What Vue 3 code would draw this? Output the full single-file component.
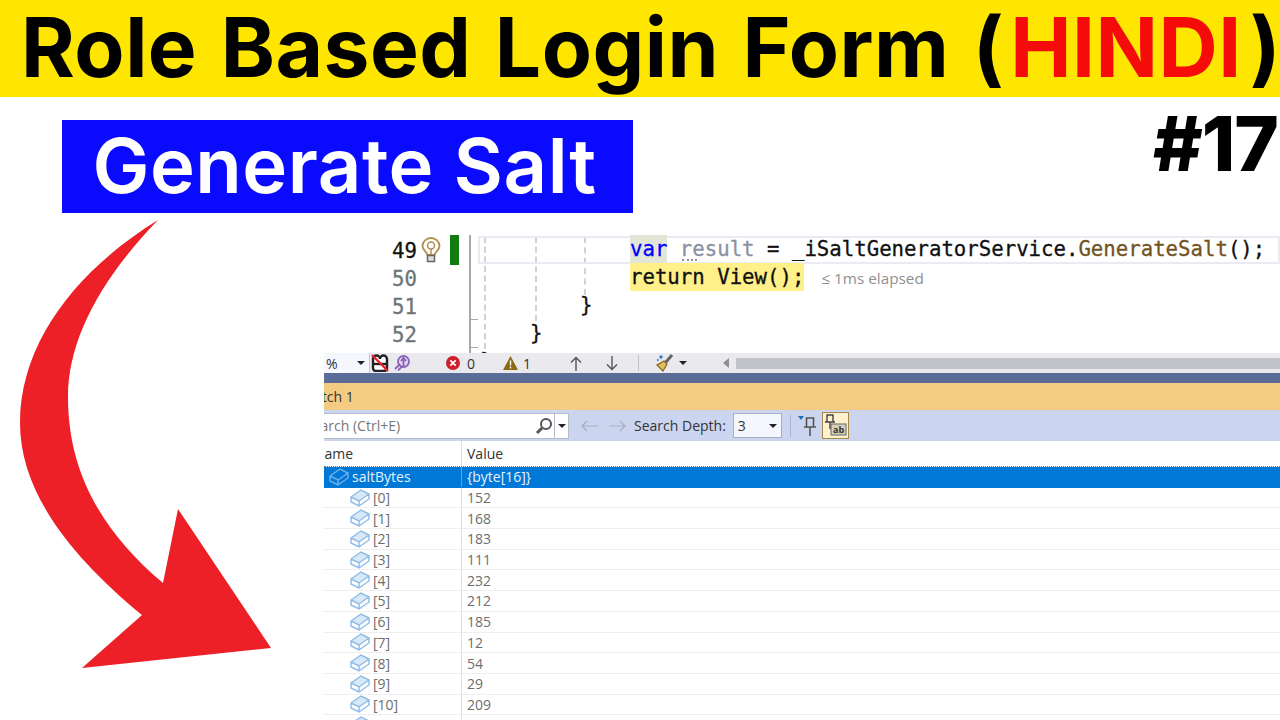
<script setup>
const rows = [
  ['[0]', '152'], ['[1]', '168'], ['[2]', '183'], ['[3]', '111'], ['[4]', '232'], ['[5]', '212'],
  ['[6]', '185'], ['[7]', '12'], ['[8]', '54'], ['[9]', '29'], ['[10]', '209'], ['[11]', '94']
]
</script>

<template>
  <div class="page">
    <header class="title">Role Based Login Form <span class="par">(</span><span class="red">HINDI</span><span class="par2">)</span></header>
    <div class="lead">
      <div class="banner">Generate Salt</div>
      <div class="num">#17</div>
    </div>

    <svg class="arrow" width="300" height="470" viewBox="0 210 300 470">
      <path fill="#ed1f27" d="M158 220C80 268 20 340 20 423C20 495 75 560 142 615L82 668L271 648L178 509L163 583C100 530 68 470 68 397C68 340 100 280 158 220Z"/>
    </svg>

    <section class="shot">
      <div class="editor">
        <div class="gutter">
          <div class="ln now">49</div><div class="ln">50</div><div class="ln">51</div><div class="ln">52</div>
        </div>
        <svg class="bulb" width="20" height="26" viewBox="0 0 20 26">
          <path d="M6.500 18C5.500 14.500 1.500 13 1.500 9A8.500 8 0 0 1 18.500 9C18.500 13 14.500 14.500 13.500 18Z" fill="#fff" stroke="#b58d4f" stroke-width="1.800"/>
          <circle cx="10" cy="8.500" r="3.500" fill="none" stroke="#b58d4f" stroke-width="1.500"/>
          <path d="M10 12v6" stroke="#b58d4f" stroke-width="1.500"/>
          <rect x="6.500" y="18.500" width="7" height="6" fill="#ddd" stroke="#666" stroke-width="1.500"/>
        </svg>
        <div class="green"></div>
        <div class="rule"></div>
        <div class="mark m1"></div>
        <div class="mark m2"></div>
        <div class="code">
          <div class="guide g1"></div><div class="guide g2"></div><div class="guide g3"></div>
          <div class="curline"></div>
          <div class="dots"></div>
          <div class="cl i3"><span class="kw">var</span> <span class="dim">result</span> = _iSaltGeneratorService.<span class="fn">GenerateSalt</span>();</div>
          <div class="cl i3"><span class="hl">return View();</span><span class="perf">≤ 1ms elapsed</span></div>
          <div class="cl i2">}</div>
          <div class="cl i1">}</div>
          <div class="cl i0">}</div>
        </div>
      </div>

      <div class="status">
        <div class="zoom"><span>%</span><i class="caret"></i></div>
        <svg class="ic1" width="18" height="18" viewBox="0 0 18 18">
          <path d="M2 9V5a3.500 3.500 0 0 1 7 0 3.500 3.500 0 0 1 7 0v9a3 3 0 0 1-3 3H5a3 3 0 0 1-3-3Z" fill="#fff" stroke="#222" stroke-width="2.400"/>
          <path d="M3 10h12" stroke="#222" stroke-width="2.400"/>
          <path d="M1 1L17 17" stroke="#ea1f2d" stroke-width="2.400"/>
        </svg>
        <svg class="ic2" width="16" height="16" viewBox="0 0 16 16">
          <circle cx="9.500" cy="6.500" r="5.500" fill="#e2d6ee" stroke="#8a63b8" stroke-width="1.800"/>
          <path d="M9.500 3v8M7 6l2.500-3L12 6M1 14l5-5M4 15.500l4-4" fill="none" stroke="#8a63b8" stroke-width="1.800"/>
        </svg>
        <svg class="err" width="14" height="14" viewBox="0 0 14 14">
          <circle cx="7" cy="7" r="7" fill="#d01c2b"/>
          <path d="M4.300 4.300l5.400 5.400M9.700 4.300l-5.400 5.400" stroke="#fff" stroke-width="1.800"/>
        </svg>
        <span class="count c0">0</span>
        <svg class="warn" width="15" height="14" viewBox="0 0 15 14">
          <path d="M7.500 0L15 14H0Z" fill="#8c6a14"/>
          <path d="M7.500 4.500v5M7.500 10.500v2" stroke="#fff" stroke-width="1.400"/>
        </svg>
        <span class="count c1">1</span>
        <svg class="up" width="12" height="15" viewBox="0 0 12 15"><path d="M6 15V1.500M1 6.500l5-5 5 5" fill="none" stroke="#555" stroke-width="1.400"/></svg>
        <svg class="down" width="12" height="15" viewBox="0 0 12 15"><path d="M6 0v13.500M1 8.500l5 5 5-5" fill="none" stroke="#555" stroke-width="1.400"/></svg>
        <div class="vsep"></div>
        <svg class="broom" width="18" height="18" viewBox="0 0 18 18">
          <path d="M1 11l6 6 4-7-3-3Z" fill="#e0bd62" stroke="#8c6a14" stroke-width="1.200"/>
          <path d="M9.500 8.500L16 1" stroke="#666" stroke-width="3"/>
          <circle cx="5" cy="3" r="1.700" fill="#2a7ad0"/>
          <circle cx="1.800" cy="6" r="1" fill="#2a7ad0"/>
        </svg>
        <i class="caret dark"></i>
        <i class="left"></i>
        <div class="thumb"></div>
      </div>

      <div class="navy"></div>
      <div class="tab"><span>Watch 1</span></div>

      <div class="tools">
        <div class="search">
          <span class="ph">Search (Ctrl+E)</span>
          <svg class="glass" width="18" height="18" viewBox="0 0 18 18">
            <circle cx="11" cy="7" r="5" fill="none" stroke="#555" stroke-width="2"/>
            <path d="M7 11l-5 5" stroke="#555" stroke-width="3"/>
          </svg>
          <div class="sdrop"><i class="caret"></i></div>
        </div>
        <svg class="nav first" width="18" height="12" viewBox="0 0 18 12"><path d="M17 6H1M6 1L1 6l5 5" fill="none" stroke="#a9aeb9" stroke-width="1.200"/></svg>
        <svg class="nav" width="18" height="12" viewBox="0 0 18 12"><path d="M1 6h16M12 1l5 5-5 5" fill="none" stroke="#a9aeb9" stroke-width="1.200"/></svg>
        <span class="depth">Search Depth:</span>
        <div class="combo"><span>3</span><i class="caret"></i></div>
        <div class="tsep"></div>
        <svg class="pin" width="20" height="24" viewBox="0 0 20 24">
          <path d="M0 2h6L3 6Z" fill="#1f6fb5"/>
          <path d="M8.500 4h7v9h-7ZM6 13h12M12 13v9" fill="none" stroke="#555" stroke-width="1.600"/>
        </svg>
        <div class="abbtn">
          <svg width="25" height="25" viewBox="0 0 25 25">
            <path d="M4 2h6v7H4ZM2 9h10M7 9v7" fill="none" stroke="#444" stroke-width="1.400"/>
            <rect x="8" y="11" width="15" height="11" fill="#d6ceb8" stroke="#666"/>
            <text x="10" y="20" class="ab">ab</text>
          </svg>
        </div>
      </div>

      <div class="head">
        <div class="c-name"><span>Name</span></div>
        <div class="c-val">Value</div>
      </div>

      <div class="row sel">
        <div class="c-name top">
          <svg class="cube" width="20" height="18" viewBox="0 0 20 18">
            <path d="M1 8l10-7 8 4v5L9 17l-8-4ZM1 8l8 4 10-7M9 12v5" fill="none" stroke="#6fb0e8" stroke-width="1.400"/>
          </svg>
          <span>saltBytes</span>
        </div>
        <div class="c-val">{byte[16]}</div>
      </div>
      <div v-for="r in rows" :key="r[0]" class="row">
        <div class="c-name kid">
          <svg class="cube" width="20" height="18" viewBox="0 0 20 18">
            <path d="M1 8l10-7 8 4-10 7Z" fill="#d9e8f7"/>
            <path d="M1 8l10-7 8 4v5L9 17l-8-4ZM1 8l8 4 10-7M9 12v5" fill="none" stroke="#8dbce8" stroke-width="1.400"/>
          </svg>
          <span>{{ r[0] }}</span>
        </div>
        <div class="c-val">{{ r[1] }}</div>
      </div>
    </section>
  </div>
</template>

<style scoped>
.page { position: relative; width: 1280px; height: 720px; overflow: hidden; background: #fff; font-family: Inter, sans-serif; }
.title { height: 97px; background: #ffe600; color: #000; font-size: 82px; font-weight: 700; line-height: 95px; padding-left: 21px; white-space: nowrap; word-spacing: 3.500px; letter-spacing: 0.500px; }
.red { color: #f60b0b; margin: 0 8px 0 6px; }
.lead { display: flex; justify-content: space-between; padding: 23px 2px 0 62px; height: 115px; box-sizing: border-box; }
.banner { width: 571px; height: 93px; padding-right: 6px; box-sizing: border-box; background: #0a0aff; color: #fff; font-size: 76px; font-weight: 600; line-height: 90px; letter-spacing: 0.500px; text-align: center; white-space: nowrap; }
.num { font-size: 76px; font-weight: 800; line-height: 94px; color: #000; margin-top: -24px; letter-spacing: -1px; }
.arrow { position: absolute; left: 0; top: 210px; }

.shot { position: absolute; left: 324px; top: 235px; width: 956px; height: 485px; overflow: hidden; font-family: "Open Sans", sans-serif; font-size: 14px; color: #333; }

.editor { position: relative; height: 118px; display: flex; font-family: "DejaVu Sans Mono", monospace; font-size: 20.700px; color: #111; overflow: hidden; -webkit-text-stroke: 0.300px currentColor; }
.gutter { width: 93px; padding-top: 2px; text-align: right; flex: none; }
.ln { height: 28px; line-height: 28px; color: #6d7478; }
.ln.now { color: #111; }
.bulb { position: absolute; left: 97px; top: 2px; }
.green { position: absolute; left: 126px; top: 0; width: 9px; height: 30px; background: #107c10; }
.rule { position: absolute; left: 145px; top: 0; width: 2px; height: 118px; background: #a8a8a8; }
.mark { position: absolute; left: 147px; width: 7px; height: 1px; background: #a8a8a8; }
.m1 { top: 84px; }
.m2 { top: 112px; }
.code { position: absolute; left: 156px; top: 0; right: 0; }
.cl { height: 28px; line-height: 28px; white-space: nowrap; position: relative; }
.i3 { padding-left: 150px; }
.i2 { padding-left: 100px; }
.i1 { padding-left: 50px; }
.i0 { padding-left: 0; }
.curline { position: absolute; left: -2px; right: 0; top: 1px; height: 28px; border: 2px solid #eaeaf2; box-sizing: border-box; }
.dots { position: absolute; left: 202px; top: 24px; width: 15px; border-top: 2px dotted #8a93a3; }
.guide { position: absolute; top: 2px; width: 0; border-left: 2px dashed #d2d2d2; }
.g1 { left: 4px; height: 112px; }
.g2 { left: 55px; height: 84px; }
.g3 { left: 104px; height: 58px; }
.kw { display: inline-block; height: 28px; color: #0000ff; background: #e2e6d6; }
.dim { color: #8a93a3; }
.fn { color: #74531f; }
.hl { display: inline-block; height: 28px; background: #fff08a; }
.perf { font-family: "Open Sans", sans-serif; font-size: 15.300px; color: #8f8f8f; margin-left: 17px; -webkit-text-stroke: 0; }

.status { position: relative; height: 20px; background: #e9e9ee; display: flex; align-items: center; }
.zoom { width: 46px; height: 20px; background: #f5f7fd; display: flex; align-items: center; justify-content: space-between; padding: 0 4px 0 2px; box-sizing: border-box; flex: none; border-right: 1px solid #c4c8d4; }
.caret { display: block; width: 0; height: 0; border: 4px solid transparent; border-top: 4px solid #222; border-bottom: 0; flex: none; }
.ic1 { margin-left: 1px; flex: none; }
.ic2 { margin-left: 5px; flex: none; }
.err { margin-left: 36px; flex: none; }
.count { color: #333; font-size: 14px; }
.c0 { margin-left: 7px; }
.warn { margin-left: 28px; flex: none; }
.c1 { margin-left: 5px; }
.up { margin-left: 39px; flex: none; }
.down { margin-left: 24px; flex: none; }
.vsep { width: 1px; height: 16px; background: #c4c4c8; margin-left: 20px; flex: none; }
.broom { margin-left: 17px; flex: none; }
.dark { margin-left: 5px; }
.left { display: block; width: 0; height: 0; border: 5px solid transparent; border-right: 6px solid #8d8d93; border-left: 0; margin-left: 36px; flex: none; }
.thumb { flex: 1; height: 11px; background: #c2c3c9; margin-left: 7px; }

.navy { height: 10px; background: #5c6c99; }
.tab { height: 27px; background: #f3cb82; line-height: 27px; overflow: hidden; font-size: 14px; color: #333; }
.tab span { margin-left: -23px; display: inline-block; }

.tools { height: 31px; background: #ccd5f0; display: flex; align-items: center; }
.search { position: relative; flex: none; width: 245px; height: 26px; background: #fff; border: 1px solid #b6bcc8; border-left: 0; box-sizing: border-box; display: flex; align-items: center; overflow: hidden; }
.ph { color: #777; margin-left: -19px; white-space: nowrap; }
.glass { position: absolute; right: 15px; top: 3px; }
.sdrop { position: absolute; right: 0; top: 0; width: 13px; height: 24px; border-left: 1px solid #b6bcc8; display: flex; align-items: center; justify-content: center; }
.nav { margin-left: 9px; flex: none; }
.first { margin-left: 12px; }
.depth { margin-left: 8px; color: #333; white-space: nowrap; }
.combo { width: 49px; height: 25px; margin-left: 7px; background: #f4f7fe; border: 1px solid #a8afc0; box-sizing: border-box; display: flex; align-items: center; justify-content: space-between; padding: 0 4px 0 4px; flex: none; }
.tsep { width: 1px; height: 22px; background: #a8b3cc; margin-left: 8px; flex: none; }
.pin { margin-left: 7px; flex: none; }
.abbtn { width: 27px; height: 27px; margin-left: 4px; background: #fff0ce; border: 1px solid #a5894a; box-sizing: border-box; display: flex; align-items: center; justify-content: center; flex: none; }
.ab { font-family: "Open Sans", sans-serif; font-size: 9px; font-weight: 700; fill: #333; }

.head { height: 26px; display: flex; align-items: center; border-bottom: 1px dotted #777; box-sizing: border-box; }
.c-name { width: 138px; flex: none; display: flex; align-items: center; height: 100%; border-right: 1px solid #dedede; overflow: hidden; box-sizing: border-box; white-space: nowrap; }
.head .c-name span { margin-left: -10px; }
.c-val { padding-left: 5px; }
.row { height: 20.700px; display: flex; align-items: center; border-bottom: 1px solid #eeeeee; box-sizing: border-box; color: #6d6d6d; }
.row.sel { background: #0078d7; color: #e8f2fb; border-bottom: 1px solid #0078d7; }
.sel .c-name { border-right-color: #5aa7e4; }
.top { padding-left: 5px; }
.top span { margin-left: 3px; }
.kid { padding-left: 26px; }
.kid span { margin-left: 3px; }
.cube { flex: none; }
</style>
